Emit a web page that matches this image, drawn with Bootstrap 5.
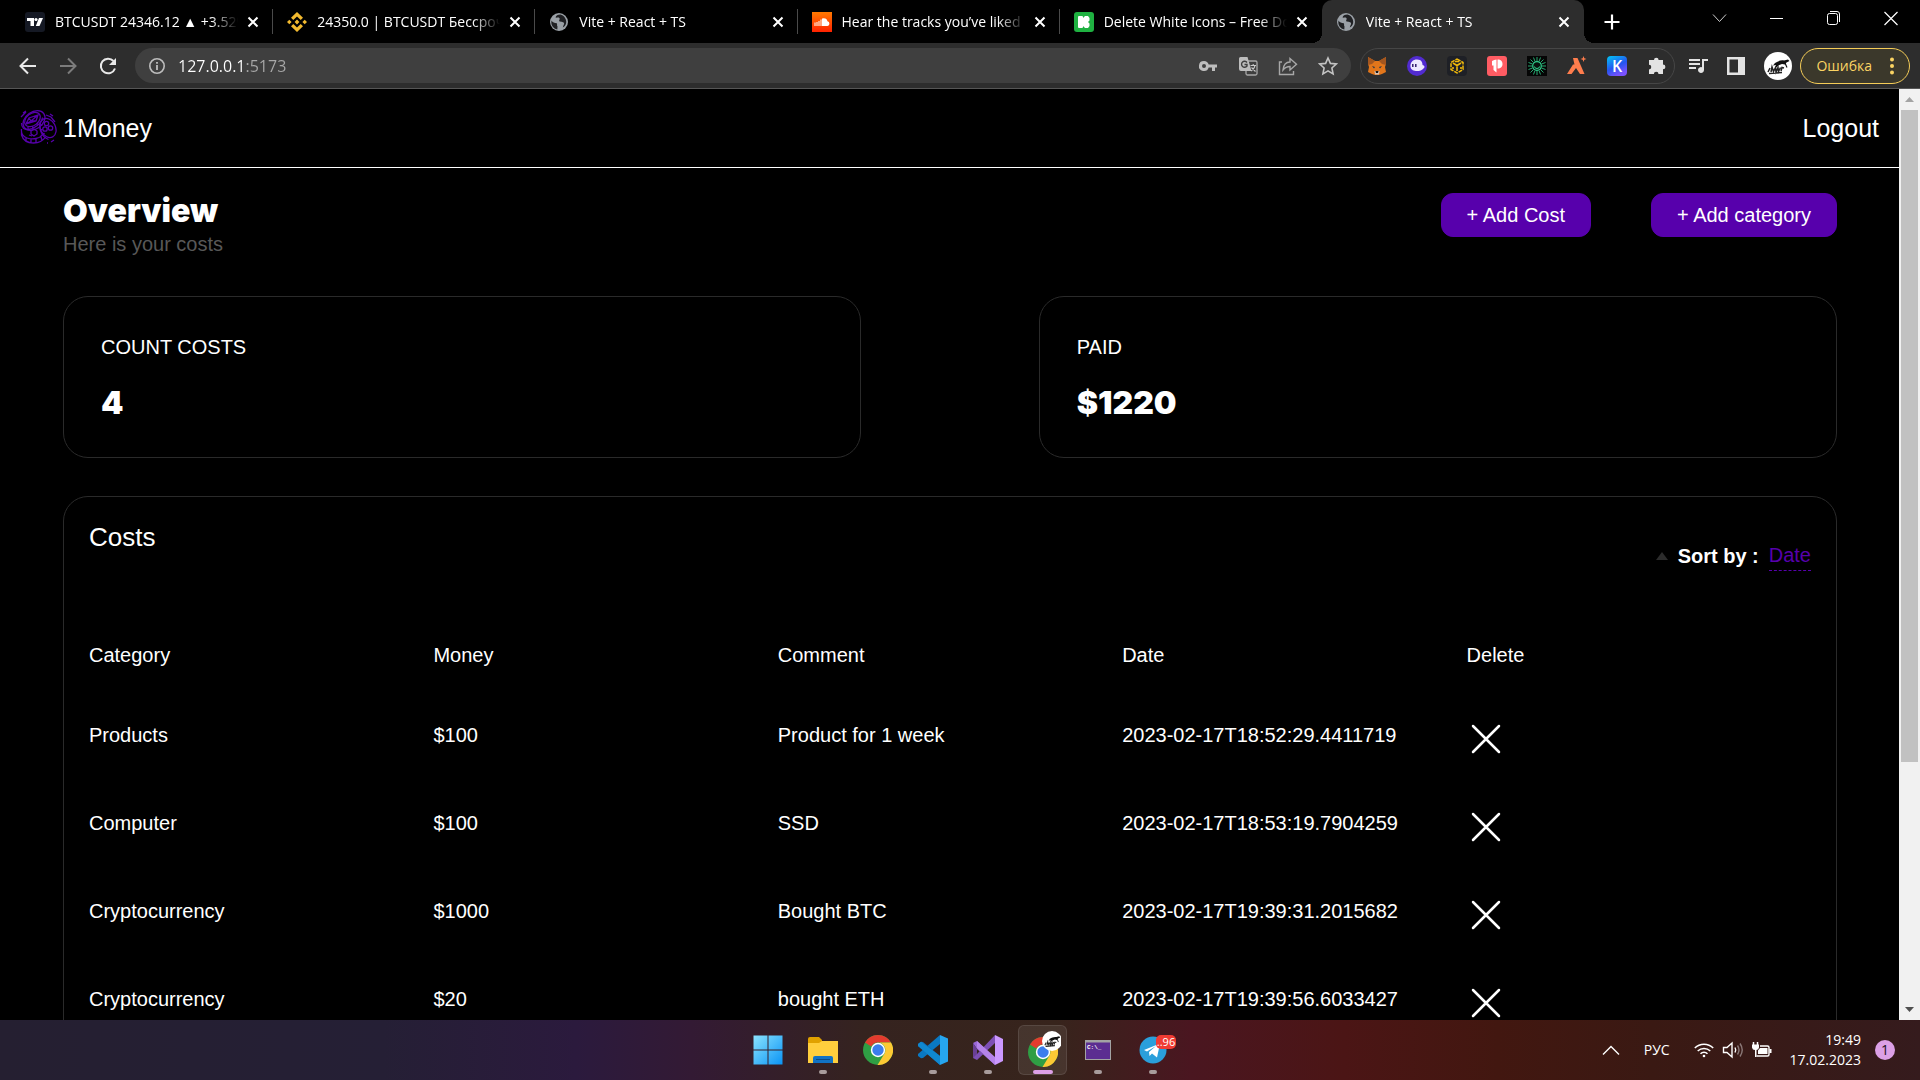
<!DOCTYPE html>
<html lang="en">
<head>
<meta charset="utf-8">
<meta name="viewport" content="width=device-width, initial-scale=1">
<title>1Money</title>
<link href="https://cdn.jsdelivr.net/npm/bootstrap@5.3.0/dist/css/bootstrap.min.css" rel="stylesheet">
<style>
  body { background: #000; color: #fff; font-family: "Liberation Sans", Arial, sans-serif; font-size: 20px; line-height: 30px; }
  svg { display: block; flex: none; }
  button { color: inherit; }
  .ui-font { font-family: "Open Sans", "Noto Sans", sans-serif; font-size: 14px; line-height: 20px; }
  .bare { background: none; border: 0; padding: 0; display: block; }

  /* tab strip */
  .tabstrip { height: 43px; background: #000; padding-left: 11px; }
  .tab-list { flex: 0 1 1573px; min-width: 0; }
  .tab-item { flex: 1 1 0; min-width: 0; padding: 0 14px; position: relative; }
  .tab-item.divided::after { content: ""; position: absolute; right: 0; top: 9px; width: 1px; height: 25px; background: #4a4a4a; }
  .tab-item.current { background: #2d2d2d; border-radius: 10px 10px 0 0; }
  .tab-item.current::before, .tab-item.current::after { content: ""; position: absolute; bottom: 0; width: 10px; height: 10px; }
  .tab-item.current::before { left: -10px; background: radial-gradient(circle at 0 0, #000 10px, #2d2d2d 10px); }
  .tab-item.current::after { right: -10px; background: radial-gradient(circle at 100% 0, #000 10px, #2d2d2d 10px); }
  .tab-title { flex: 1 1 0; min-width: 0; overflow: hidden; white-space: nowrap; margin: 0 9px 0 10px; -webkit-mask-image: linear-gradient(90deg, #000 85%, transparent); mask-image: linear-gradient(90deg, #000 85%, transparent); }
  .win-controls { padding-right: 20px; gap: 38px; height: 36px; }

  /* toolbar */
  .toolbar { height: 46px; background: #2d2d2d; border-bottom: 1px solid #565656; padding: 0 10px 0 18px; color: #e3e3e3; }
  .nav-keys { gap: 20px; margin-right: 17px; }
  .omnibox { height: 35px; background: #3f3f3f; border-radius: 18px; padding: 0 13px; color: #bdbdbd; }
  .omnibox input { background: linear-gradient(90deg, #fff 68px, #a8a8a8 68px); -webkit-background-clip: text; background-clip: text; color: #fff; -webkit-text-fill-color: transparent; border: 0; outline: 0; padding: 0; margin-left: 12px; font-size: 16px; line-height: 24px; }
  .omni-actions, .ext-pill { gap: 20px; }
  .ext-pill { height: 36px; border: 1px solid #464646; border-radius: 18px; padding: 0 7px 0 6px; margin-left: 9px; }
  .tool-right { margin: 0 8px 0 13px; gap: 18px; }
  .error-pill { height: 36px; border: 1px solid #f5cd58; border-radius: 18px; background: #3b382b; color: #fbd463; padding: 0 12px 0 15px; gap: 15px; }

  /* page */
  .app-view { flex: 1 1 0; min-height: 0; }
  .app-header { height: 79px; border-bottom: 1px solid #fff; padding: 0 20px; font-size: 25px; }
  .app-header a { color: #fff; text-decoration: none; }
  .app-brand { gap: 6px; }
  .app-main { padding: 25px 62px 0 63px; }
  .display-heavy { font-family: Inter, "Liberation Sans", sans-serif; font-weight: 900; font-size: 32px; line-height: 36px; margin: 0; }
  .muted-line { color: #585858; }
  .btn-violet { --bs-btn-bg: #5700ac; --bs-btn-color: #fff; --bs-btn-border-color: #5700ac; --bs-btn-hover-bg: #6a10c4; --bs-btn-hover-color: #fff; --bs-btn-border-radius: 12px; --bs-btn-padding-x: 25px; --bs-btn-padding-y: 6px; --bs-btn-font-size: 20px; --bs-btn-line-height: 30px; }
  .action-row { gap: 60px; }
  .stat-row { margin: 37px 0 38px; }
  .panel { border: 1px solid #2a2a2a; border-radius: 25px; }
  .stat-panel { width: 45%; padding: 35px 37px 36px; }
  .stat-panel .display-heavy { margin-top: 23px; }
  .costs-panel { padding: 25px 25px 40px; }
  .costs-panel h2 { font-size: 26px; line-height: 30px; font-weight: 400; margin: 0; }
  .sorter { margin-top: 18px; gap: 10px; }
  .sorter a { color: #5700ac; text-decoration: none; border-bottom: 1px dashed #5700ac; }
  .costs-grid { width: 100%; table-layout: fixed; margin-top: 69px; }
  .costs-grid th { font-weight: 400; height: 80px; vertical-align: top; padding: 0; }
  .costs-grid td { height: 88px; vertical-align: top; padding: 0; white-space: nowrap; }

  .scroll-rail { width: 21px; background: #f1f1f1; }
  .scroll-thumb { height: 652px; background: #c1c1c1; margin: 0 2px; }
  .scroll-arrow { height: 21px; }

  /* taskbar */
  .taskbar { height: 60px; display: grid; grid-template-columns: 1fr auto 1fr; background: linear-gradient(90deg, #251f31 0, #251f35 20%, #2b1a3d 30%, #331a34 36%, #35231f 45%, #37241c 55%, #4a1620 62%, #4b1515 70%, #421710 78%, #3a1913 86%, #351b1d 100%); }
  .app-key { width: 55px; height: 60px; position: relative; display: flex; align-items: center; justify-content: center; }
  .app-key.running::after { content: ""; position: absolute; bottom: 6px; left: 50%; margin-left: -4px; width: 8px; height: 4px; border-radius: 2px; background: #a89c9c; }
  .app-key.focused::after { width: 20px; margin-left: -10px; background: #dca0e6; }
  .app-key.focused::before { content: ""; position: absolute; inset: 5px 3px 5px 3px; border-radius: 6px; background: #ffffff14; border: 1px solid #ffffff18; }
  .app-key svg { position: relative; }
  .count-badge { position: absolute; left: 31px; top: 15px; width: 20px; height: 14px; border-radius: 5px; background: #f13b33; color: #fff; font-size: 11px; line-height: 14px; text-align: center; }
  .tray { padding-right: 25px; }
  .clock { line-height: 20px; margin: 0 14px 0 18px; }
  .note-dot { width: 20px; height: 20px; border-radius: 50%; background: #dca0e6; color: #1d1020; text-align: center; }
</style>
</head>
<body class="vh-100 overflow-hidden d-flex flex-column">

<svg width="0" height="0" class="position-absolute" aria-hidden="true">
  <symbol id="i-close" viewBox="0 0 12 12"><path d="M1.500 1.500l9 9M10.500 1.500l-9 9" stroke="#fff" stroke-width="2"/></symbol>
  <symbol id="i-globe" viewBox="0 0 20 20"><circle cx="10" cy="10" r="9" fill="#9aa0a6"/><path d="M11.500 2.500c-3 .2-4.500 1-5 3 1.500.5 3-.5 4 .7.900 1-.8 1.700-.3 2.800 1 1.500 4 .2 4.800 2 .6 1.500-1 2.500-1.200 4.500l2-1.400c1.500-2 1.800-4 1-6.500-1-2.700-2.500-4.500-5.300-5.100zM2.500 8.500c1 1.800 3 2.500 5.300 2.800.8 1-.3 2 .7 3.200l-.2 3c-3.800-.8-6.700-4-5.800-9z" fill="#202124"/></symbol>
  <symbol id="i-cross" viewBox="0 0 38 38"><path d="M6 6l26 26M32 6l-26 26" stroke="#fff" stroke-width="2.500" stroke-linecap="round"/></symbol>
  <symbol id="i-chrome" viewBox="0 0 30 30"><circle cx="15" cy="15" r="15" fill="#2f9e44"/><path d="M15 0A15 15 0 0 1 28 7.500H15a7.500 7.500 0 0 0-6.700 4L2 7.500A15 15 0 0 1 15 0z" fill="#e33b2e"/><path d="M28 7.500A15 15 0 0 1 14.500 30l7-11.500a7.500 7.500 0 0 0-6.500-11z" fill="#fcc934"/><circle cx="15" cy="15" r="7.200" fill="#fff"/><circle cx="15" cy="15" r="5.700" fill="#3b7ded"/></symbol>
  <symbol id="i-avatar" viewBox="0 0 28 28"><circle cx="14" cy="14" r="14" fill="#fff"/><path d="M11 11c3-2 6-3 9-2.500l4-1 1.500 1.500-3 1.500-1.500 2-3-.5-4 1.500-2 1 0-1.500-3 .5z" fill="#111"/><path d="M21 11l2 4.500M14 13l-2 2" stroke="#111" stroke-width="1.200"/><path d="M4 20l2-4M7 20l1-5 1.500 4.500 2-4 .5 4.500 2-4.500.5 4 2-4M17 19l1-3.500 2 .5M5 21.500l13-1" stroke="#222" stroke-width="1.500" fill="none"/></symbol>
</svg>

<header class="ui-font">
  <div class="tabstrip d-flex align-items-stretch">
    <div class="tab-list d-flex">
      <div class="tab-item divided d-flex align-items-center">
        <svg width="20" height="20" viewBox="0 0 20 20"><rect width="20" height="20" rx="3" fill="#151924"/><path d="M2 6h7v8H5.500V9H2zM14 6h4l-3.500 8h-3.700z" fill="#fff"/><circle cx="11" cy="7.500" r="1.600" fill="#fff"/></svg>
        <span class="tab-title">BTCUSDT 24346.12 ▲ +3.52%</span>
        <button class="bare" aria-label="Close tab"><svg width="12" height="12"><use href="#i-close"/></svg></button>
      </div>
      <div class="tab-item divided d-flex align-items-center">
        <svg width="20" height="20" viewBox="0 0 20 20" fill="#f3ba2f"><path d="M10 0l6 5.800-2.300 2.300L10 4.600 6.300 8.100 4 5.800zM10 20l6-5.800-2.300-2.300-3.700 3.500-3.700-3.500L4 14.200zM10 7.600l2.400 2.400-2.400 2.400L7.600 10zM2.300 7.700L4.600 10l-2.300 2.300L0 10zM17.700 7.700L20 10l-2.300 2.300-2.300-2.300z"/></svg>
        <span class="tab-title">24350.0 | BTCUSDT Бессрочный</span>
        <button class="bare" aria-label="Close tab"><svg width="12" height="12"><use href="#i-close"/></svg></button>
      </div>
      <div class="tab-item divided d-flex align-items-center">
        <svg width="20" height="20"><use href="#i-globe"/></svg>
        <span class="tab-title">Vite + React + TS</span>
        <button class="bare" aria-label="Close tab"><svg width="12" height="12"><use href="#i-close"/></svg></button>
      </div>
      <div class="tab-item divided d-flex align-items-center">
        <svg width="20" height="20" viewBox="0 0 20 20"><defs><linearGradient id="sc" x2="0" y2="1"><stop stop-color="#ff7a00"/><stop offset="1" stop-color="#ff2200"/></linearGradient></defs><rect width="20" height="20" fill="url(#sc)"/><path d="M10 6.500a4 4 0 0 1 5.500 2.800A2.400 2.400 0 0 1 15.500 14H10z" fill="#fff"/><path d="M3 10.500V14M5 10v4M7 9v5M9 7.500V14" stroke="#ffc9ad" stroke-width="1.500"/></svg>
        <span class="tab-title">Hear the tracks you’ve liked</span>
        <button class="bare" aria-label="Close tab"><svg width="12" height="12"><use href="#i-close"/></svg></button>
      </div>
      <div class="tab-item d-flex align-items-center">
        <svg width="20" height="20" viewBox="0 0 20 20"><rect width="20" height="20" rx="3" fill="#1fb141"/><rect x="4" y="4" width="5" height="12" rx="1" fill="#fff"/><path d="M9 6l2-2h3l1.500 2v2.500L14 10l1.500 1.500V14L14 16h-3l-2-2z" fill="#fff"/></svg>
        <span class="tab-title">Delete White Icons – Free Download</span>
        <button class="bare" aria-label="Close tab"><svg width="12" height="12"><use href="#i-close"/></svg></button>
      </div>
      <div class="tab-item current d-flex align-items-center">
        <svg width="20" height="20"><use href="#i-globe"/></svg>
        <span class="tab-title">Vite + React + TS</span>
        <button class="bare" aria-label="Close tab"><svg width="12" height="12"><use href="#i-close"/></svg></button>
      </div>
    </div>
    <button class="bare ps-3 ms-1" aria-label="New tab"><svg width="16" height="16" viewBox="0 0 16 16"><path d="M8 .5v15M.5 8h15" stroke="#fff" stroke-width="2.200"/></svg></button>
    <div class="win-controls d-flex align-items-center ms-auto">
      <button class="bare" aria-label="Search tabs"><svg width="19" height="16" viewBox="0 0 19 16" fill="none" stroke="#d0d0d0"><path d="M3 4.500l6.500 7 6.500-7"/></svg></button>
      <button class="bare" aria-label="Minimize"><svg width="19" height="16" viewBox="0 0 19 16"><path d="M3 8.500h13" stroke="#fff"/></svg></button>
      <button class="bare" aria-label="Restore"><svg width="19" height="16" viewBox="0 0 19 16" fill="none" stroke="#fff"><rect x="3.500" y="3.500" width="10" height="11" rx="2"/><path d="M6 1.500h7a2.500 2.500 0 0 1 2.500 2.500v8"/></svg></button>
      <button class="bare" aria-label="Close window"><svg width="19" height="16" viewBox="0 0 19 16"><path d="M3.500 2l13 13M16.500 2l-13 13" stroke="#fff" stroke-width="1.200"/></svg></button>
    </div>
  </div>

  <div class="toolbar d-flex align-items-center">
    <div class="nav-keys d-flex">
      <button class="bare" aria-label="Back"><svg width="20" height="20" viewBox="0 0 20 20" fill="none" stroke="#e8e8e8" stroke-width="2"><path d="M18 10H3M10 2.500L2.500 10l7.500 7.500"/></svg></button>
      <button class="bare" aria-label="Forward"><svg width="20" height="20" viewBox="0 0 20 20" fill="none" stroke="#7c7c7c" stroke-width="2"><path d="M2 10h15M10 2.500l7.500 7.500-7.500 7.500"/></svg></button>
      <button class="bare" aria-label="Reload"><svg width="20" height="20" viewBox="0 0 20 20" fill="none" stroke="#e8e8e8" stroke-width="2"><path d="M17 12.500A7.300 7.300 0 1 1 15.500 5"/><path d="M18 2v7h-7z" fill="#e8e8e8" stroke="none"/></svg></button>
    </div>
    <div class="omnibox d-flex align-items-center flex-grow-1">
      <svg width="18" height="18" viewBox="0 0 18 18"><circle cx="9" cy="9" r="7.200" fill="none" stroke="#bdbdbd" stroke-width="1.600"/><path d="M9 8v5M9 5v1.800" stroke="#bdbdbd" stroke-width="1.800"/></svg>
      <input type="text" class="flex-grow-1" aria-label="Address" value="127.0.0.1:5173">
      <div class="omni-actions d-flex">
        <svg width="20" height="20" viewBox="0 0 20 20"><path d="M6 5a5 5 0 1 0 4.700 6.500H14V15h3v-3.500h2V8.500h-8.300A5 5 0 0 0 6 5zm0 3a2 2 0 1 1 0 4 2 2 0 0 1 0-4z" fill="#bdbdbd" fill-rule="evenodd"/></svg>
        <svg width="20" height="20" viewBox="0 0 20 20"><rect x="8" y="5" width="11" height="14" rx="1.500" fill="none" stroke="#a8a8a8" stroke-width="1.300"/><path d="M2.500 1h7l4 14H3a2 2 0 0 1-2-2V2.500A1.500 1.500 0 0 1 2.500 1z" fill="#bdbdbd"/><path d="M9 6.500A3 3 0 1 0 9 10V8.500H6.500" fill="none" stroke="#3f3f3f" stroke-width="1.400"/><path d="M12.500 9.500H18M15.200 8v1.500M17 9.500c-.5 2.500-2 4.500-4 5.500M13.500 11.500l4 4" fill="none" stroke="#c8c8c8" stroke-width="1.100"/></svg>
        <svg width="20" height="20" viewBox="0 0 20 20" fill="none" stroke="#a8a8a8" stroke-width="1.400"><path d="M4 6H1.500v12.500h14V15"/><path d="M5 14c.5-5 3-8 7-8V2.500l6.500 5.700L12 14v-3.500c-3 0-5 1-7 3.500z"/></svg>
        <svg width="20" height="20" viewBox="0 0 20 20" fill="none" stroke="#c4c4c4" stroke-width="1.600"><path d="M10 2l2.400 5.400 5.900.6-4.400 4 1.200 5.900L10 14.900 4.900 17.900l1.200-5.900L1.700 8l5.900-.6z"/></svg>
      </div>
    </div>
    <div class="ext-pill d-flex align-items-center">
      <svg width="20" height="20" viewBox="0 0 20 20"><path d="M1 1l7 4h4l7-4v7l-1 3 1 5-4 2-3 1H8l-3-1-4-2 1-5-1-3z" fill="#e2761b"/><path d="M1 1l7 4-3 3-4 1zM19 1l-7 4 3 3 4 1z" fill="#a3561f"/><path d="M5 10l3 1-1 1.500zM15 10l-3 1 1 1.500z" fill="#233447"/><path d="M7.500 15h5l-.5 3.500H8z" fill="#d7c1b3"/><path d="M8.500 15h3l-.5 2H9z" fill="#161616"/></svg>
      <svg width="20" height="20" viewBox="0 0 20 20"><circle cx="10" cy="10" r="10" fill="#512bd0"/><path d="M3.500 11c-.5-5 2.500-7.500 6.500-7.500 4.500 0 5.500 3 5.500 5.500 2 .2 2.500 2 1.500 3-2 2.500-4.500 3-7 3-3 0-6-1-6.500-4z" fill="#eeeaff"/><path d="M5.800 8v3M8.800 8v3" stroke="#33206e" stroke-width="1.500"/></svg>
      <svg width="20" height="20" viewBox="0 0 20 20"><rect width="20" height="20" rx="4" fill="#1e2026"/><path d="M10 3l6 3.500v7L10 17l-6-3.500v-7z" fill="none" stroke="#f0b90b" stroke-width="1.500" stroke-dasharray="4 1"/><path d="M6 7l4 2.500L14 7M10 9.500V15M6 11v2M14 11v2M8 5.500h4" stroke="#f0b90b" stroke-width="1.600" fill="none"/></svg>
      <svg width="20" height="20" viewBox="0 0 20 20"><rect width="20" height="20" rx="3" fill="#ff5c63"/><path d="M5 5c1.500-1 3-1.500 4.500-1.500v13L6.500 14V9.500H5zM10.500 3.500c3.500 0 5 2 5 4.500s-1.500 4.500-5 4.500z" fill="#fff"/></svg>
      <svg width="20" height="20" viewBox="0 0 20 20"><rect width="20" height="20" fill="#050505"/><path d="M10 1v4M10 15v4M1 10h4M15 10h4M3.500 3.500l3 3M13.500 13.500l3 3M16.500 3.500l-3 3M6.500 13.500l-3 3M6.500 1.500l1.500 4M12 14.500l1.500 4M1.500 6.500l4 1.500M14.500 12l4 1.500M13.500 1.500L12 5.500M8 14.500l-1.500 4M18.500 6.500l-4 1.500M5.500 12l-4 1.500" stroke="#2fd08c" stroke-width=".8"/><circle cx="10" cy="10" r="4.300" fill="#07120d" stroke="#2fd08c" stroke-width="1.200"/><path d="M7.500 10.500a2.500 2 0 0 0 5 0" stroke="#2fd08c" fill="none"/></svg>
      <svg width="20" height="20" viewBox="0 0 20 20" fill="#ff7d4d"><path d="M6 2h4.500l7 16h-4.500L9 12l-4.500 6H0l6-9.500h1.500zM16.500 0l.8 2.200 2.200.8-2.200.8-.8 2.200-.8-2.200L13.500 3l2.200-.8z"/></svg>
      <svg width="20" height="20" viewBox="0 0 20 20"><defs><linearGradient id="kp" x2=".5" y2="1"><stop stop-color="#00c8f5"/><stop offset=".6" stop-color="#2555f0"/><stop offset="1" stop-color="#7a52ff"/></linearGradient></defs><rect width="20" height="20" rx="4" fill="url(#kp)"/><text x="10" y="15.500" font-size="16" text-anchor="middle" fill="#fff" font-weight="600">K</text></svg>
      <svg width="20" height="20" viewBox="0 0 20 20"><path d="M7 4a2.300 2.300 0 0 1 4.600 0H16v4.500a2.300 2.300 0 0 1 0 4.800V18h-4.500a2.300 2.300 0 0 0-4.600 0H2v-4.600a2.300 2.300 0 0 0 0-4.600V4z" fill="#e3e3e3"/></svg>
    </div>
    <div class="tool-right d-flex align-items-center">
      <svg width="20" height="20" viewBox="0 0 20 20"><path d="M1 4h11M1 8h11M1 12h7" stroke="#e3e3e3" stroke-width="2"/><path d="M14 3h6v2h-4v9a3 3 0 1 1-2-2.800z" fill="#e3e3e3"/></svg>
      <svg width="20" height="20" viewBox="0 0 20 20"><path d="M1 1h18v18H1zm2.500 2.500v13H12v-13z" fill="#e3e3e3" fill-rule="evenodd"/></svg>
      <svg width="28" height="28"><use href="#i-avatar"/></svg>
    </div>
    <button class="error-pill d-flex align-items-center">Ошибка<svg width="10" height="20" viewBox="0 0 10 20" fill="#fbd463"><circle cx="5" cy="3.500" r="2"/><circle cx="5" cy="10" r="2"/><circle cx="5" cy="16.500" r="2"/></svg></button>
  </div>
</header>

<div class="app-view d-flex">
  <div class="flex-grow-1 overflow-hidden">
    <nav class="app-header d-flex align-items-center justify-content-between">
      <a href="#" class="app-brand d-flex align-items-center">
        <svg width="37" height="37" viewBox="0 0 37 37" fill="none" stroke="#5700ac" stroke-width="1.300">
          <ellipse cx="14" cy="10.500" rx="12" ry="8.500" transform="rotate(-35 14 10.500)"/><ellipse cx="12.500" cy="9.500" rx="8.800" ry="6" transform="rotate(-38 12.500 9.500)"/>
          <path d="M6 14l3-6 9-3-2 6zM6 14l5-3 7-6M9 8l2 3 5 0"/>
          <path d="M1.500 13c0 5 3 7 7 6.500 6-.8 13-6 14-12M8 19v-2M13 18l-1-2M18 15l-1-2"/>
          <path d="M1.500 19c-.5 4 1 7.500 5.500 9 6 2 13 .5 15.500-3.500M1.500 21v4c1.500 5 6 8 12 8 6.500 0 10-3 12-6M6 28v3M11 29v4M16 29v4M21 27l1 3"/>
          <path d="M11 21l3-2 3 2v3l-3 2-3-2zM9 25l3 1"/>
          <ellipse cx="28" cy="18" rx="7.500" ry="10" transform="rotate(-28 28 18)"/><path d="M20.500 12c-2 6 1 15 8 17.500M20 15l2.500 0M20.500 20l2.500-1M22.500 25l2-2"/>
          <circle cx="26.500" cy="13.500" r="2.200"/><circle cx="30.500" cy="18" r="2.200"/><circle cx="25" cy="19" r="2.200"/>
          <path d="M1 7l5-5M3 3l3-2M26 5l5 2 4 5M30 4l3 2M27 33l1 0M31 32l3-2"/>
        </svg>
        <span>1Money</span>
      </a>
      <a href="#">Logout</a>
    </nav>

    <main class="app-main">
      <div class="d-flex justify-content-between align-items-start">
        <div>
          <h1 class="display-heavy">Overview</h1>
          <div class="muted-line">Here is your costs</div>
        </div>
        <div class="action-row d-flex">
          <button class="btn btn-violet">+ Add Cost</button>
          <button class="btn btn-violet">+ Add category</button>
        </div>
      </div>

      <div class="stat-row d-flex justify-content-between">
        <section class="panel stat-panel"><div>COUNT COSTS</div><div class="display-heavy">4</div></section>
        <section class="panel stat-panel"><div>PAID</div><div class="display-heavy">$1220</div></section>
      </div>

      <section class="panel costs-panel">
        <div class="d-flex justify-content-between align-items-start">
          <h2>Costs</h2>
          <div class="sorter d-flex align-items-center">
            <svg width="12" height="8" viewBox="0 0 12 8"><path d="M6 0l6 8H0z" fill="#2c2c2c"/></svg>
            <b>Sort by :</b>
            <a href="#">Date</a>
          </div>
        </div>
        <table class="costs-grid">
          <thead><tr><th>Category</th><th>Money</th><th>Comment</th><th>Date</th><th>Delete</th></tr></thead>
          <tbody>
            <tr><td>Products</td><td>$100</td><td>Product for 1 week</td><td>2023-02-17T18:52:29.4411719</td><td><button class="bare" aria-label="Delete"><svg width="38" height="38"><use href="#i-cross"/></svg></button></td></tr>
            <tr><td>Computer</td><td>$100</td><td>SSD</td><td>2023-02-17T18:53:19.7904259</td><td><button class="bare" aria-label="Delete"><svg width="38" height="38"><use href="#i-cross"/></svg></button></td></tr>
            <tr><td>Cryptocurrency</td><td>$1000</td><td>Bought BTC</td><td>2023-02-17T19:39:31.2015682</td><td><button class="bare" aria-label="Delete"><svg width="38" height="38"><use href="#i-cross"/></svg></button></td></tr>
            <tr><td>Cryptocurrency</td><td>$20</td><td>bought ETH</td><td>2023-02-17T19:39:56.6033427</td><td><button class="bare" aria-label="Delete"><svg width="38" height="38"><use href="#i-cross"/></svg></button></td></tr>
          </tbody>
        </table>
      </section>
    </main>
  </div>
  <div class="scroll-rail d-flex flex-column flex-shrink-0">
    <div class="scroll-arrow d-flex align-items-center justify-content-center"><svg width="9" height="5" viewBox="0 0 9 5"><path d="M4.500 0L9 5H0z" fill="#a3a3a3"/></svg></div>
    <div class="scroll-thumb"></div>
    <div class="scroll-arrow d-flex align-items-center justify-content-center mt-auto"><svg width="9" height="5" viewBox="0 0 9 5"><path d="M0 0h9L4.500 5z" fill="#505050"/></svg></div>
  </div>
</div>

<footer class="taskbar ui-font">
  <div></div>
  <div class="d-flex">
    <button class="bare app-key" aria-label="Start"><svg width="30" height="30" viewBox="0 0 30 30"><defs><linearGradient id="w" x2="1" y2="1"><stop stop-color="#8be4ff"/><stop offset="1" stop-color="#0a93f5"/></linearGradient></defs><path d="M.5.5h14v14H.5zM15.500.5h14v14h-14zM.5 15.500h14v14H.5zM15.500 15.500h14v14h-14z" fill="url(#w)"/></svg></button>
    <button class="bare app-key running" aria-label="Explorer"><svg width="30" height="30" viewBox="0 0 30 30"><path d="M0 4q0-2 2-2h9l3 3v6H0z" fill="#e0a100"/><path d="M0 8h11l3-2h16v22H0z" fill="#ffce3d"/><path d="M5 28v-5q0-2 2-2h16q2 0 2 2v5z" fill="#1172c4"/><path d="M8 24.500h14" stroke="#0b4a86"/></svg></button>
    <button class="bare app-key" aria-label="Chrome"><svg width="30" height="30"><use href="#i-chrome"/></svg></button>
    <button class="bare app-key running" aria-label="VS Code"><svg width="30" height="30" viewBox="0 0 30 30"><path d="M22 0v9L5 23l-2 .3L0 21v-2z" fill="#0a78c2"/><path d="M22 30v-9L5 7 3 6.700 0 9v2z" fill="#0b6db8"/><path d="M0 9l3-2.300L22 21v9L0 11z" fill="#1088d0"/><path d="M22 0l8 3.500v23L22 30z" fill="#26a6f0"/></svg></button>
    <button class="bare app-key running" aria-label="Visual Studio"><svg width="30" height="30" viewBox="0 0 30 30"><path d="M0 8l4-2 18 18v6L4 14z" fill="#9a68d8"/><path d="M0 8l4 6v8l-4 1z" fill="#6a4096"/><path d="M0 23l4 2L22 8V0L4 19z" fill="#7d4fb5"/><path d="M4 6l18 16v8L4 13z" fill="#b583ea"/><path d="M22 0l8 4v22l-8 4z" fill="#cb98ff"/></svg></button>
    <button class="bare app-key running focused" aria-label="Chrome profile"><svg width="36" height="38" viewBox="0 0 36 38"><use href="#i-chrome" x="3" y="6" width="30" height="30"/><use href="#i-avatar" x="17" y="0" width="20" height="20"/></svg></button>
    <button class="bare app-key running" aria-label="Terminal"><svg width="26" height="20" viewBox="0 0 26 20"><rect x=".5" y=".5" width="25" height="19" fill="#5c2d91" stroke="#a3a3a3"/><path d="M1 1.500h24" stroke="#a3a3a3" stroke-width="2"/><text x="2" y="9" font-family="Liberation Mono" font-size="6" font-weight="700" fill="#fff">C:\_</text></svg></button>
    <button class="bare app-key running" aria-label="Telegram"><svg width="28" height="28" viewBox="0 0 28 28"><circle cx="14" cy="14" r="13.500" fill="#2a9fdb"/><path d="M5 14l16-6.500-3 14-5-4-2.500 2.500-.5-4 7-6-9 5.500z" fill="#fff"/></svg><span class="count-badge">..96</span></button>
  </div>
  <div class="tray d-flex align-items-center justify-content-end">
    <svg width="18" height="12" viewBox="0 0 18 12" fill="none" stroke="#fff" stroke-width="1.400"><path d="M1 10.500L9 2.500l8 8"/></svg>
    <span class="ms-4 me-4">РУС</span>
    <svg width="20" height="16" viewBox="0 0 20 16" fill="none" stroke="#fff" stroke-width="1.500"><path d="M.8 6a13 13 0 0 1 18.400 0M3.700 9a9 9 0 0 1 12.600 0M6.500 11.800a5 5 0 0 1 7 0"/><circle cx="10" cy="14" r="1.300" fill="#fff" stroke="none"/></svg>
    <svg class="ms-2 me-2" width="22" height="18" viewBox="0 0 22 18" fill="none" stroke="#fff" stroke-width="1.400"><path d="M1.500 6.500H5l5-4.500v14l-5-4.500H1.500z"/><path d="M13 6.500q1.500 2.500 0 5"/><path d="M15.500 4.500q3 4.500 0 9M18 2.500q4.500 6.500 0 13" stroke="#8a7877"/></svg>
    <svg width="20" height="18" viewBox="0 0 20 18"><path d="M1.500 1v3M5.500 1v3" stroke="#fff" stroke-width="1.500"/><path d="M0 3.500h7v3a3 3 0 0 1-2.500 2.500v7H3V9A3 3 0 0 1 0 6.500z" fill="#fff"/><path d="M8 5h7.500A1.500 1.500 0 0 1 17 6.500v7a1.500 1.500 0 0 1-1.500 1.500H4.500" fill="none" stroke="#fff" stroke-width="1.400"/><path d="M8 7h7.500v6H6V9.500zM17.500 8h2v4h-2z" fill="#fff"/></svg>
    <div class="clock text-end">19:49<br>17.02.2023</div>
    <div class="note-dot">1</div>
  </div>
</footer>

<script src="https://cdn.jsdelivr.net/npm/bootstrap@5.3.0/dist/js/bootstrap.bundle.min.js"></script>
</body>
</html>
